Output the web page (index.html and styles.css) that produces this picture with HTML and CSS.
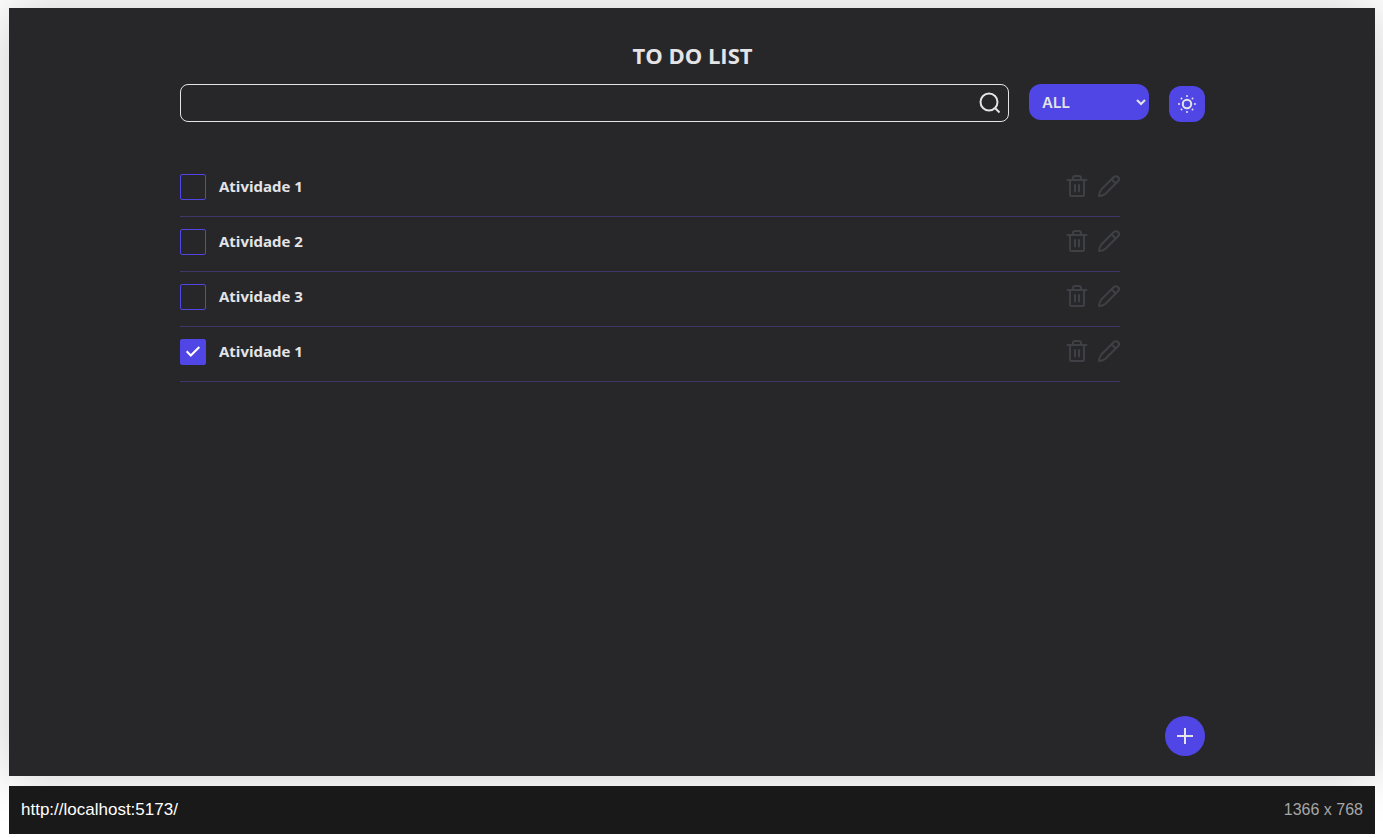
FILE: index.html
```html
<!DOCTYPE html>
<html lang="pt-BR">
<head>
<meta charset="utf-8">
<meta name="viewport" content="width=device-width, initial-scale=1">
<title>To Do List</title>
<link rel="stylesheet" href="styles.css">
</head>
<body>
<svg class="sprite" aria-hidden="true">
  <symbol id="trash" viewBox="0 0 22 22"><path d="M1.500 5h19M18 5v14.500a1.500 1.500 0 0 1-1.500 1.500h-11A1.500 1.500 0 0 1 4 19.500V5M7 5V3a2 2 0 0 1 2-2h4a2 2 0 0 1 2 2v2M9 10v6.500M13 10v6.500"/></symbol>
  <symbol id="pencil" viewBox="0 0 22 22"><path d="M15.800 2a2.900 2.900 0 0 1 4.200 4.200L7.500 18.700 Q4.500 21 1 21 Q1 17.500 3.300 14.500zM13.500 4.300l4.200 4.200"/></symbol>
</svg>
<main class="screen">
  <div class="content">
    <h1 class="title">TO DO LIST</h1>
    <form class="toolbar">
      <div class="search">
        <input class="search-input" type="search" aria-label="Search">
        <button class="search-button" type="button" aria-label="Search">
          <svg class="search-icon" viewBox="0 0 22 22"><circle cx="10" cy="10" r="8.500"/><path d="m16 16 4.500 4.500"/></svg>
        </button>
      </div>
      <select class="filter" aria-label="Filter">
        <option>ALL</option>
        <option>Complete</option>
        <option>Incomplete</option>
      </select>
      <button class="theme" type="button" aria-label="Toggle theme">
        <svg class="theme-icon" viewBox="0 0 20 20"><circle class="sun" cx="10" cy="10" r="4.200"/><g class="rays"><circle cx="10" cy="2" r="1"/><circle cx="10" cy="18" r="1"/><circle cx="2" cy="10" r="1"/><circle cx="18" cy="10" r="1"/><circle cx="4.500" cy="4.500" r="1"/><circle cx="15.500" cy="4.500" r="1"/><circle cx="4.500" cy="15.500" r="1"/><circle cx="15.500" cy="15.500" r="1"/></g></svg>
      </button>
    </form>
    <ul class="tasks">
      <li class="task">
        <label class="task-label"><input class="check" type="checkbox"><span class="task-name">Atividade 1</span></label>
        <button class="action" type="button" aria-label="Delete"><svg class="action-icon"><use href="#trash"/></svg></button>
        <button class="action" type="button" aria-label="Edit"><svg class="action-icon"><use href="#pencil"/></svg></button>
      </li>
      <li class="task">
        <label class="task-label"><input class="check" type="checkbox"><span class="task-name">Atividade 2</span></label>
        <button class="action" type="button" aria-label="Delete"><svg class="action-icon"><use href="#trash"/></svg></button>
        <button class="action" type="button" aria-label="Edit"><svg class="action-icon"><use href="#pencil"/></svg></button>
      </li>
      <li class="task">
        <label class="task-label"><input class="check" type="checkbox"><span class="task-name">Atividade 3</span></label>
        <button class="action" type="button" aria-label="Delete"><svg class="action-icon"><use href="#trash"/></svg></button>
        <button class="action" type="button" aria-label="Edit"><svg class="action-icon"><use href="#pencil"/></svg></button>
      </li>
      <li class="task">
        <label class="task-label"><input class="check" type="checkbox" checked><span class="task-name">Atividade 1</span></label>
        <button class="action" type="button" aria-label="Delete"><svg class="action-icon"><use href="#trash"/></svg></button>
        <button class="action" type="button" aria-label="Edit"><svg class="action-icon"><use href="#pencil"/></svg></button>
      </li>
    </ul>
    <button class="add" type="button" aria-label="Add task">
      <svg class="add-icon" viewBox="0 0 16 16"><path d="M8 0v16M0 8h16"/></svg>
    </button>
  </div>
</main>
<footer class="status">
  <a class="url" href="http://localhost:5173/">http://localhost:5173/</a>
  <span class="size">1366 x 768</span>
</footer>
</body>
</html>
```
FILE: styles.css
```css
* { box-sizing: border-box; }

body {
  display: flex;
  flex-direction: column;
  gap: 10px;
  min-height: 100vh;
  margin: 0;
  padding: 8px 8px 4px 9px;
  background: #fff;
  font-family: "Open Sans", "Noto Sans", sans-serif;
}

button {
  display: grid;
  place-items: center;
  margin: 0;
  padding: 0;
  border: 0;
  background: none;
  cursor: pointer;
}

svg { fill: none; stroke: currentColor; }

.sprite { position: absolute; width: 0; height: 0; }

.screen {
  display: flex;
  flex: 1;
  padding: 32px 170px 20px 171px;
  background: #27272a;
  color: #e4e4e7;
  box-shadow: 0 0 50px rgb(0 0 0 / 20%);
}

.content { display: flex; flex: 1; flex-direction: column; }

.title {
  margin: 0 0 14px;
  font-size: 22px;
  line-height: 30px;
  text-align: center;
}

.toolbar { display: flex; gap: 20px; align-items: flex-start; }

.search {
  display: flex;
  flex: 1;
  height: 38px;
  padding: 0 7px;
  border: 1px solid #e4e4e7;
  border-radius: 8px;
}

.search-input {
  flex: 1;
  min-width: 0;
  padding: 0 4px;
  border: 0;
  outline: 0;
  background: transparent;
  color: inherit;
  font: inherit;
}

.search-button { color: inherit; }
.search-icon { width: 22px; height: 22px; stroke-width: 2; }

.filter {
  width: 120px;
  height: 36px;
  padding: 0 1px 0 9px;
  border: 0;
  border-radius: 12px;
  background: #4f46e5;
  color: #e4e4e7;
  font: 600 15px/20px Inter, sans-serif;
}

.theme {
  width: 36px;
  height: 36px;
  margin-top: 2px;
  border-radius: 12px;
  background: #4f46e5;
  color: #e4e4e7;
}

.theme-icon { width: 20px; height: 20px; }
.sun { stroke-width: 2; }
.rays { fill: currentColor; stroke: none; }

.tasks {
  flex: 1;
  margin: 0 85px 0 0;
  padding: 40px 0 0;
  list-style: none;
}

.task {
  display: flex;
  gap: 10px;
  align-items: center;
  padding: 12px 0 16px;
  border-bottom: 1px solid #3c3867;
}

.task-label {
  display: flex;
  flex: 1;
  gap: 13px;
  align-items: center;
}

.task-name {
  padding-bottom: 2px;
  font-size: 15px;
  font-weight: 700;
  line-height: 24px;
}

.check {
  display: grid;
  place-items: center;
  width: 26px;
  height: 26px;
  margin: 0;
  border: 1px solid #4f46e5;
  border-radius: 2px;
  appearance: none;
}

.check:checked { background: #4f46e5; }

.check:checked::before {
  width: 16px;
  height: 16px;
  background: #fff;
  clip-path: polygon(6% 50%, 15% 41%, 36% 62%, 85% 14%, 94% 23%, 36% 81%);
  content: "";
}

.action { padding-bottom: 2px; color: #3f3f46; }
.action-icon { width: 22px; height: 22px; stroke-width: 2; stroke-linejoin: round; stroke-linecap: round; }

.add {
  align-self: flex-end;
  width: 40px;
  height: 40px;
  border-radius: 50%;
  background: #4f46e5;
  color: #e4e4e7;
}

.add-icon { width: 16px; height: 16px; stroke-width: 2; }

.status {
  display: flex;
  justify-content: space-between;
  align-items: center;
  height: 48px;
  padding: 0 12px;
  background: #191919;
  font: 16px/24px "Liberation Sans", Arial, sans-serif;
}

.url { color: #fff; font-size: 17px; text-decoration: none; }
.size { color: #a6a6a6; }
```
